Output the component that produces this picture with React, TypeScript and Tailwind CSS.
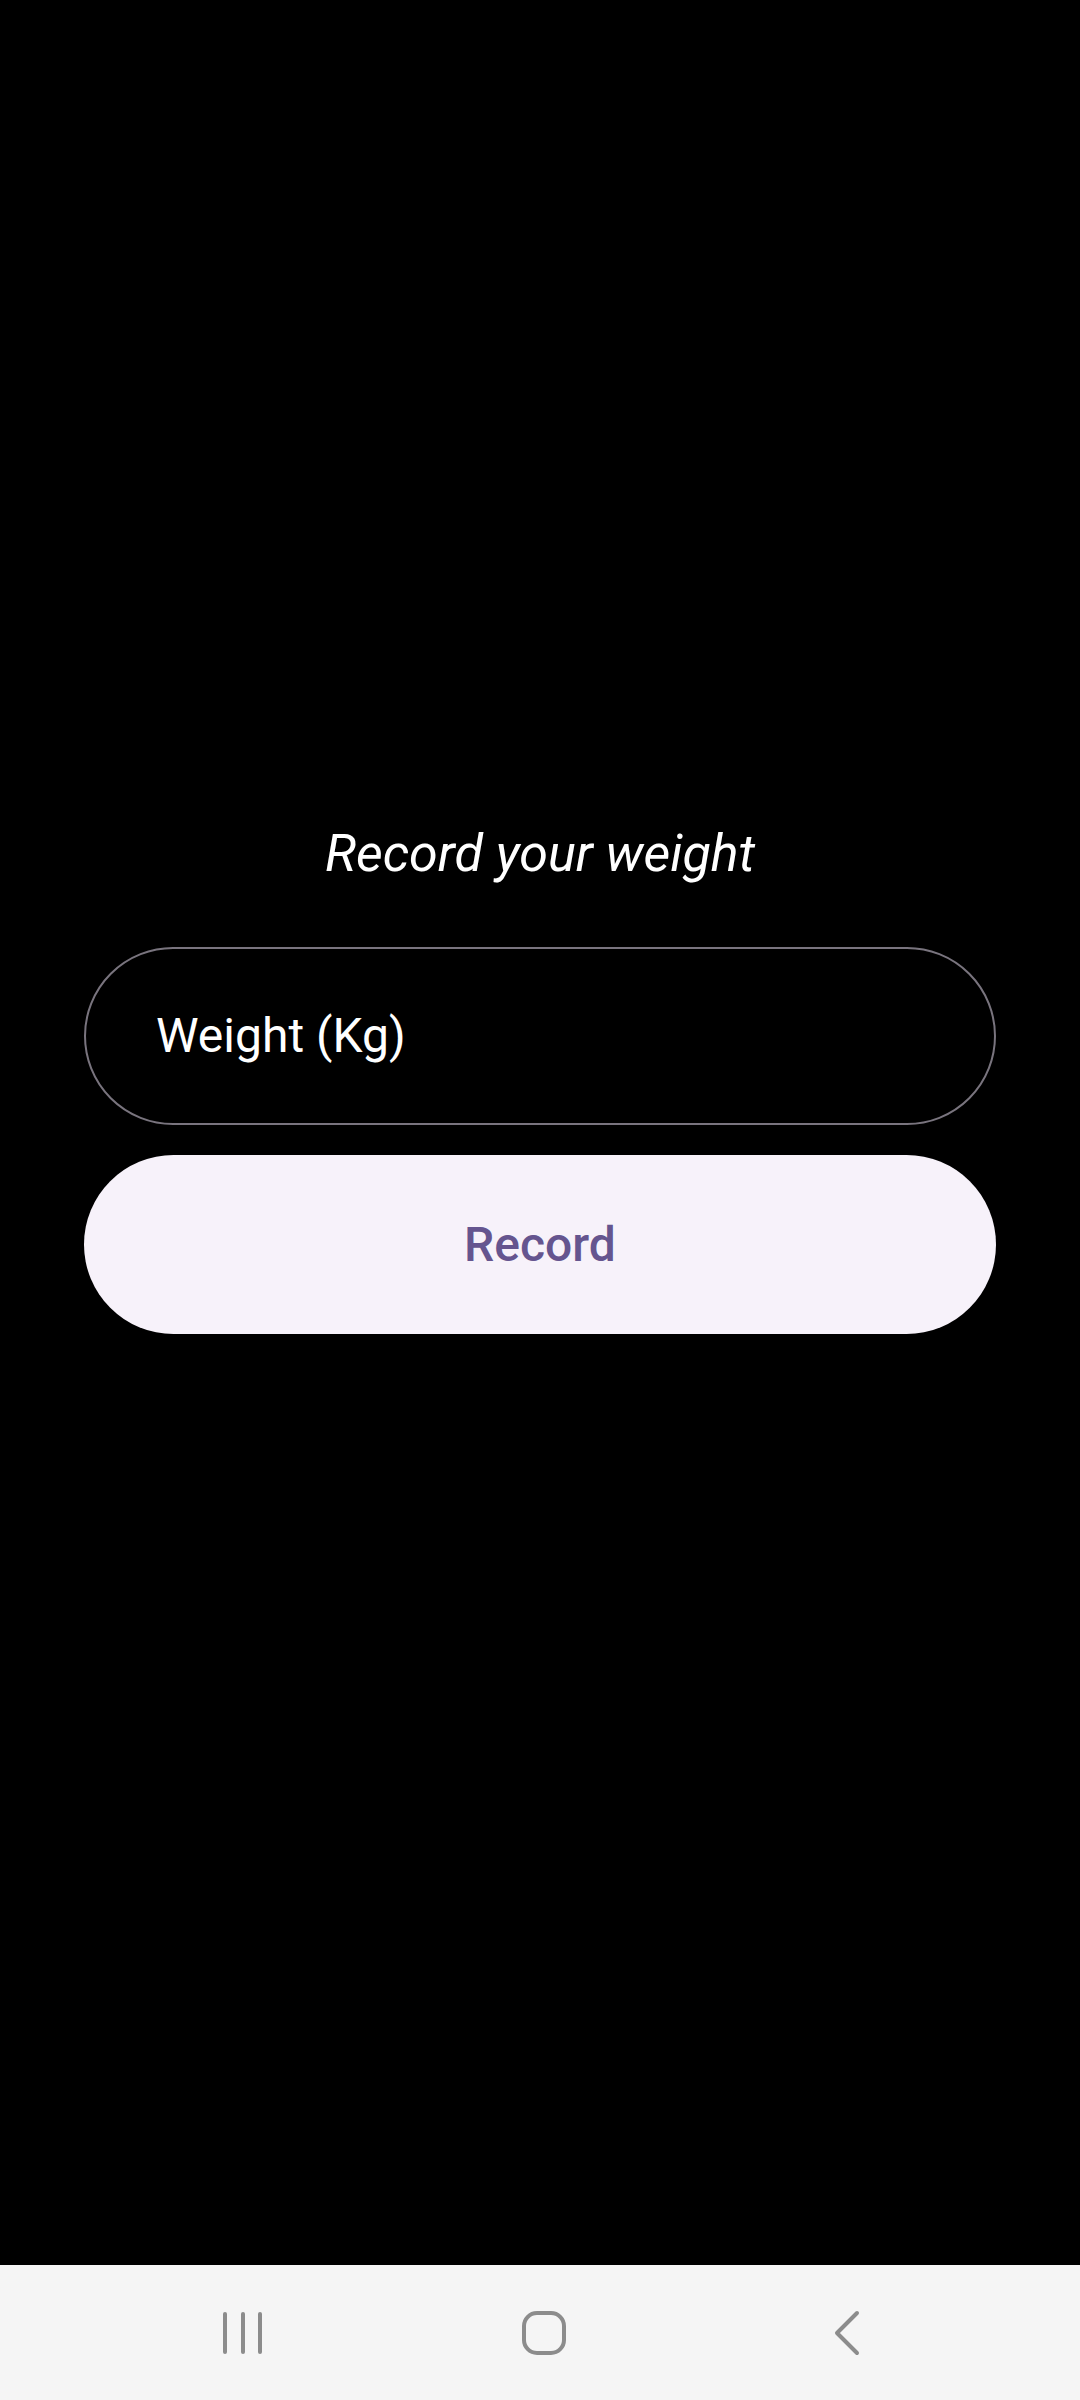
function NavBar() {
    return (
        <div className="h-[135px] bg-[#f5f5f5] flex items-center">
            <div className="w-[222px]" />
            <svg width="42" height="44" viewBox="0 0 42 44" fill="none">
                <line x1="3" y1="3" x2="3" y2="41" stroke="#8c8c8c" strokeWidth="4" strokeLinecap="round" />
                <line x1="21" y1="3" x2="21" y2="41" stroke="#8c8c8c" strokeWidth="4" strokeLinecap="round" />
                <line x1="38" y1="3" x2="38" y2="41" stroke="#8c8c8c" strokeWidth="4" strokeLinecap="round" />
            </svg>
            <div className="w-[257px]" />
            <svg width="46" height="44" viewBox="0 0 46 44" fill="none">
                <rect x="3" y="2" width="40" height="40" rx="13" stroke="#8c8c8c" strokeWidth="4" />
            </svg>
            <div className="w-[266px]" />
            <svg width="28" height="46" viewBox="0 0 28 46" fill="none">
                <path d="M24 3 L4 23 L24 43" stroke="#8c8c8c" strokeWidth="4" strokeLinecap="round" strokeLinejoin="round" />
            </svg>
        </div>
    );
}

function App() {
    return (
        <div className="w-[1080px] h-[2400px] bg-black flex flex-col" style={{ fontFamily: "Roboto, 'Noto Sans', sans-serif" }}>
            <div className="flex-1 flex flex-col pt-[824px] px-[84px]">
                <p className="text-center text-white italic text-[52px] leading-[60px]">Record your weight</p>
                <div className="mt-[63px] h-[178px] rounded-full border-2 border-[#79747e] flex items-center pl-[70px]">
                    <span className="text-white text-[48px] leading-none">Weight (Kg)</span>
                </div>
                <button className="mt-[30px] h-[179px] rounded-full bg-[#f7f2fa] flex items-center justify-center">
                    <span className="text-[#65558f] text-[48px] font-medium leading-none">Record</span>
                </button>
            </div>
            <NavBar />
        </div>
    );
}

export default App;
